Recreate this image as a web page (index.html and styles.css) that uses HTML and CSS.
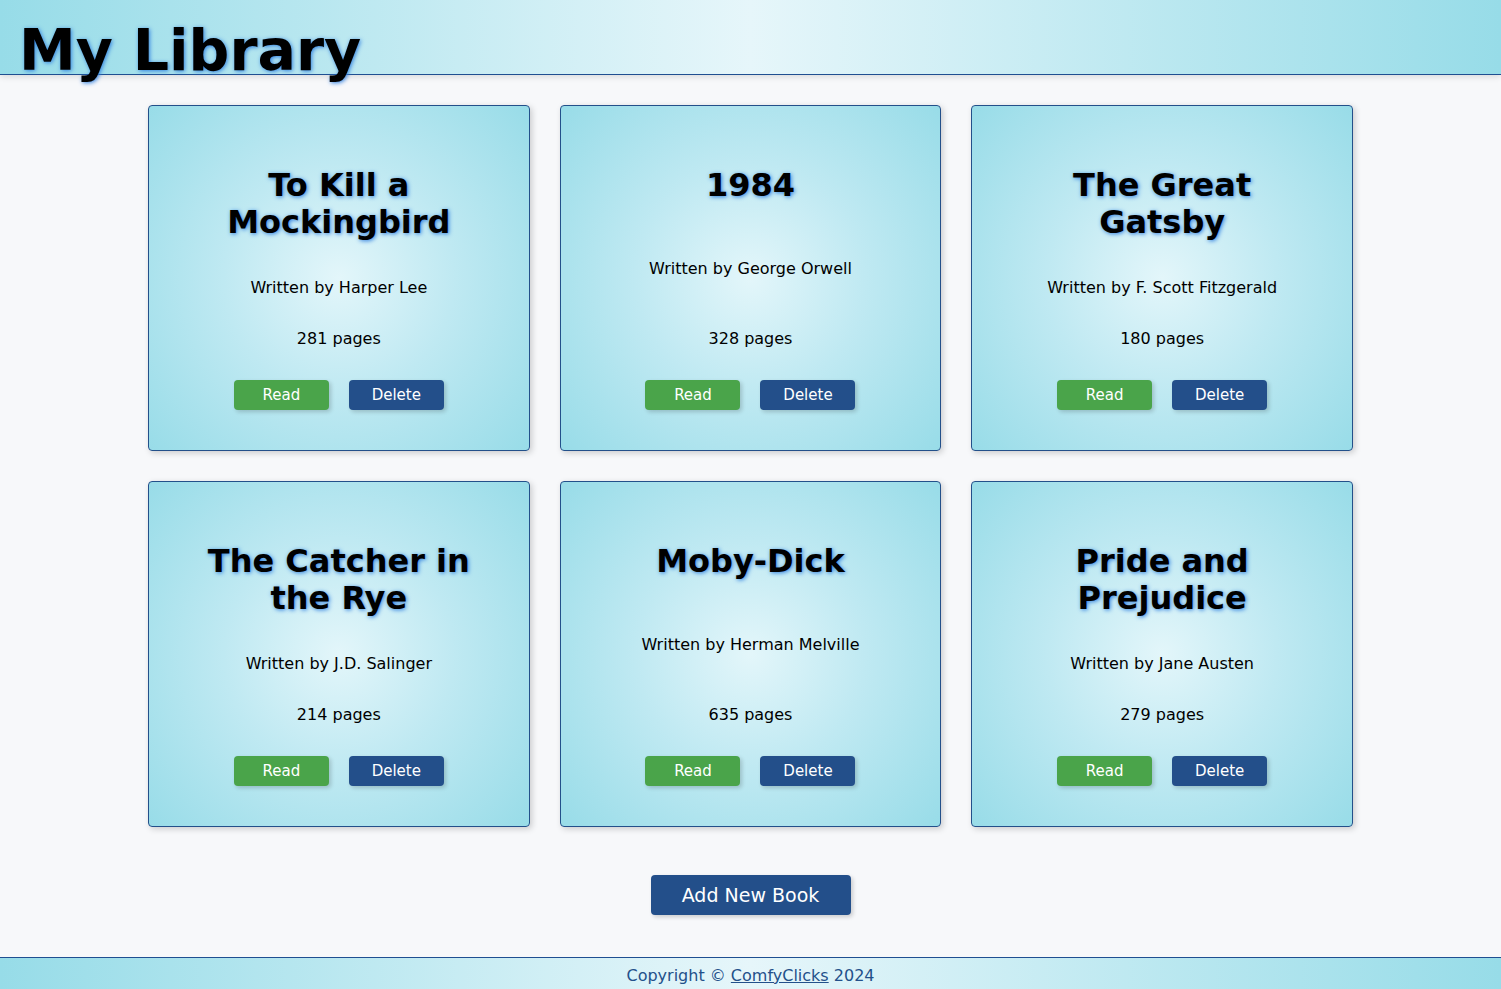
FILE: index.html
```html
<!DOCTYPE html>
<html lang="en">
<head>
<meta charset="utf-8">
<title>My Library</title>
<link rel="stylesheet" href="styles.css">
</head>
<body>
<header class="site-header">
  <h1 class="site-title">My Library</h1>
</header>
<main class="main">
  <section class="book-grid">
    <article class="book-card">
      <h2 class="book-title">To Kill a Mockingbird</h2>
      <div class="book-author"><p>Written by Harper Lee</p></div>
      <p class="book-pages">281 pages</p>
      <div class="book-actions">
        <button class="btn btn-read">Read</button>
        <button class="btn btn-delete">Delete</button>
      </div>
    </article>
    <article class="book-card">
      <h2 class="book-title">1984</h2>
      <div class="book-author"><p>Written by George Orwell</p></div>
      <p class="book-pages">328 pages</p>
      <div class="book-actions">
        <button class="btn btn-read">Read</button>
        <button class="btn btn-delete">Delete</button>
      </div>
    </article>
    <article class="book-card">
      <h2 class="book-title">The Great Gatsby</h2>
      <div class="book-author"><p>Written by F. Scott Fitzgerald</p></div>
      <p class="book-pages">180 pages</p>
      <div class="book-actions">
        <button class="btn btn-read">Read</button>
        <button class="btn btn-delete">Delete</button>
      </div>
    </article>
    <article class="book-card">
      <h2 class="book-title">The Catcher in the Rye</h2>
      <div class="book-author"><p>Written by J.D. Salinger</p></div>
      <p class="book-pages">214 pages</p>
      <div class="book-actions">
        <button class="btn btn-read">Read</button>
        <button class="btn btn-delete">Delete</button>
      </div>
    </article>
    <article class="book-card">
      <h2 class="book-title">Moby-Dick</h2>
      <div class="book-author"><p>Written by Herman Melville</p></div>
      <p class="book-pages">635 pages</p>
      <div class="book-actions">
        <button class="btn btn-read">Read</button>
        <button class="btn btn-delete">Delete</button>
      </div>
    </article>
    <article class="book-card">
      <h2 class="book-title">Pride and Prejudice</h2>
      <div class="book-author"><p>Written by Jane Austen</p></div>
      <p class="book-pages">279 pages</p>
      <div class="book-actions">
        <button class="btn btn-read">Read</button>
        <button class="btn btn-delete">Delete</button>
      </div>
    </article>
  </section>
  <div class="add-row">
    <button class="btn btn-add">Add New Book</button>
  </div>
</main>
<footer class="site-footer">
  <p>Copyright © <a href="#" class="footer-link">ComfyClicks</a> 2024</p>
</footer>
</body>
</html>
```

FILE: styles.css
```css
* { box-sizing: border-box; }

html, body {
  margin: 0;
  padding: 0;
}

body {
  background: #f7f8fa;
  font-family: "DejaVu Sans", Verdana, sans-serif;
  color: #000;
}

.site-header {
  height: 75px;
  background: linear-gradient(to right, #97dce8 0%, #e6f6fa 50%, #97dce8 100%);
  border-bottom: 1px solid #1f4f91;
  box-shadow: 0 2px 6px rgba(0, 0, 0, 0.12);
  position: relative;
  z-index: 1;
}

.site-title {
  margin: 0;
  padding: 17px 0 0 19px;
  font-size: 57px;
  font-weight: bold;
  line-height: 1.164;
  white-space: nowrap;
  text-shadow: 1px 1px 4px #2f7fe0;
}

.main {
  padding: 30px 0 0;
}

.book-grid {
  width: 1205px;
  margin: 0 auto;
  display: grid;
  grid-template-columns: repeat(3, 1fr);
  gap: 30px;
}

.book-card {
  height: 346px;
  display: flex;
  flex-direction: column;
  align-items: center;
  text-align: center;
  padding: 61px 40px 40px;
  border: 1px solid #23508a;
  border-radius: 4px;
  background: radial-gradient(circle at 50% 50%, #e3f6fa 0%, #bfe9f2 45%, #98dce8 100%);
  box-shadow: 2px 2px 6px rgba(0, 0, 0, 0.18);
}

.book-title {
  margin: 0;
  font-size: 32px;
  font-weight: bold;
  line-height: 37px;
  text-shadow: 1px 1px 4px #2f7fe0;
}

.book-author {
  flex: 1;
  display: flex;
  align-items: center;
  justify-content: center;
  padding-top: 4px;
}

.book-author p,
.book-pages {
  margin: 0;
  font-size: 16px;
  line-height: 19px;
  white-space: nowrap;
}

.book-pages {
  margin-bottom: 32px;
}

.book-actions {
  display: flex;
  gap: 20px;
}

.btn {
  border: none;
  border-radius: 4px;
  color: #fff;
  font-family: "DejaVu Sans", Verdana, sans-serif;
  cursor: pointer;
  box-shadow: 2px 2px 4px rgba(0, 0, 0, 0.18);
}

.btn-read,
.btn-delete {
  width: 95px;
  height: 30px;
  font-size: 15px;
  padding: 0;
}

.btn-read { background: #4aa44a; }
.btn-delete { background: #234f8a; }

.add-row {
  display: flex;
  justify-content: center;
  padding: 48px 0 42px;
}

.btn-add {
  width: 200px;
  height: 40px;
  font-size: 19px;
  background: #234f8a;
  padding: 0;
}

.site-footer {
  height: 32px;
  border-top: 1px solid #1f4f91;
  background: linear-gradient(to right, #97dce8 0%, #e6f6fa 50%, #97dce8 100%);
  display: flex;
  align-items: center;
  justify-content: center;
  color: #23508a;
  font-size: 16px;
}

.site-footer p {
  margin: 0;
  padding-top: 3px;
}

.footer-link {
  color: #23508a;
  text-decoration: underline;
}
```
